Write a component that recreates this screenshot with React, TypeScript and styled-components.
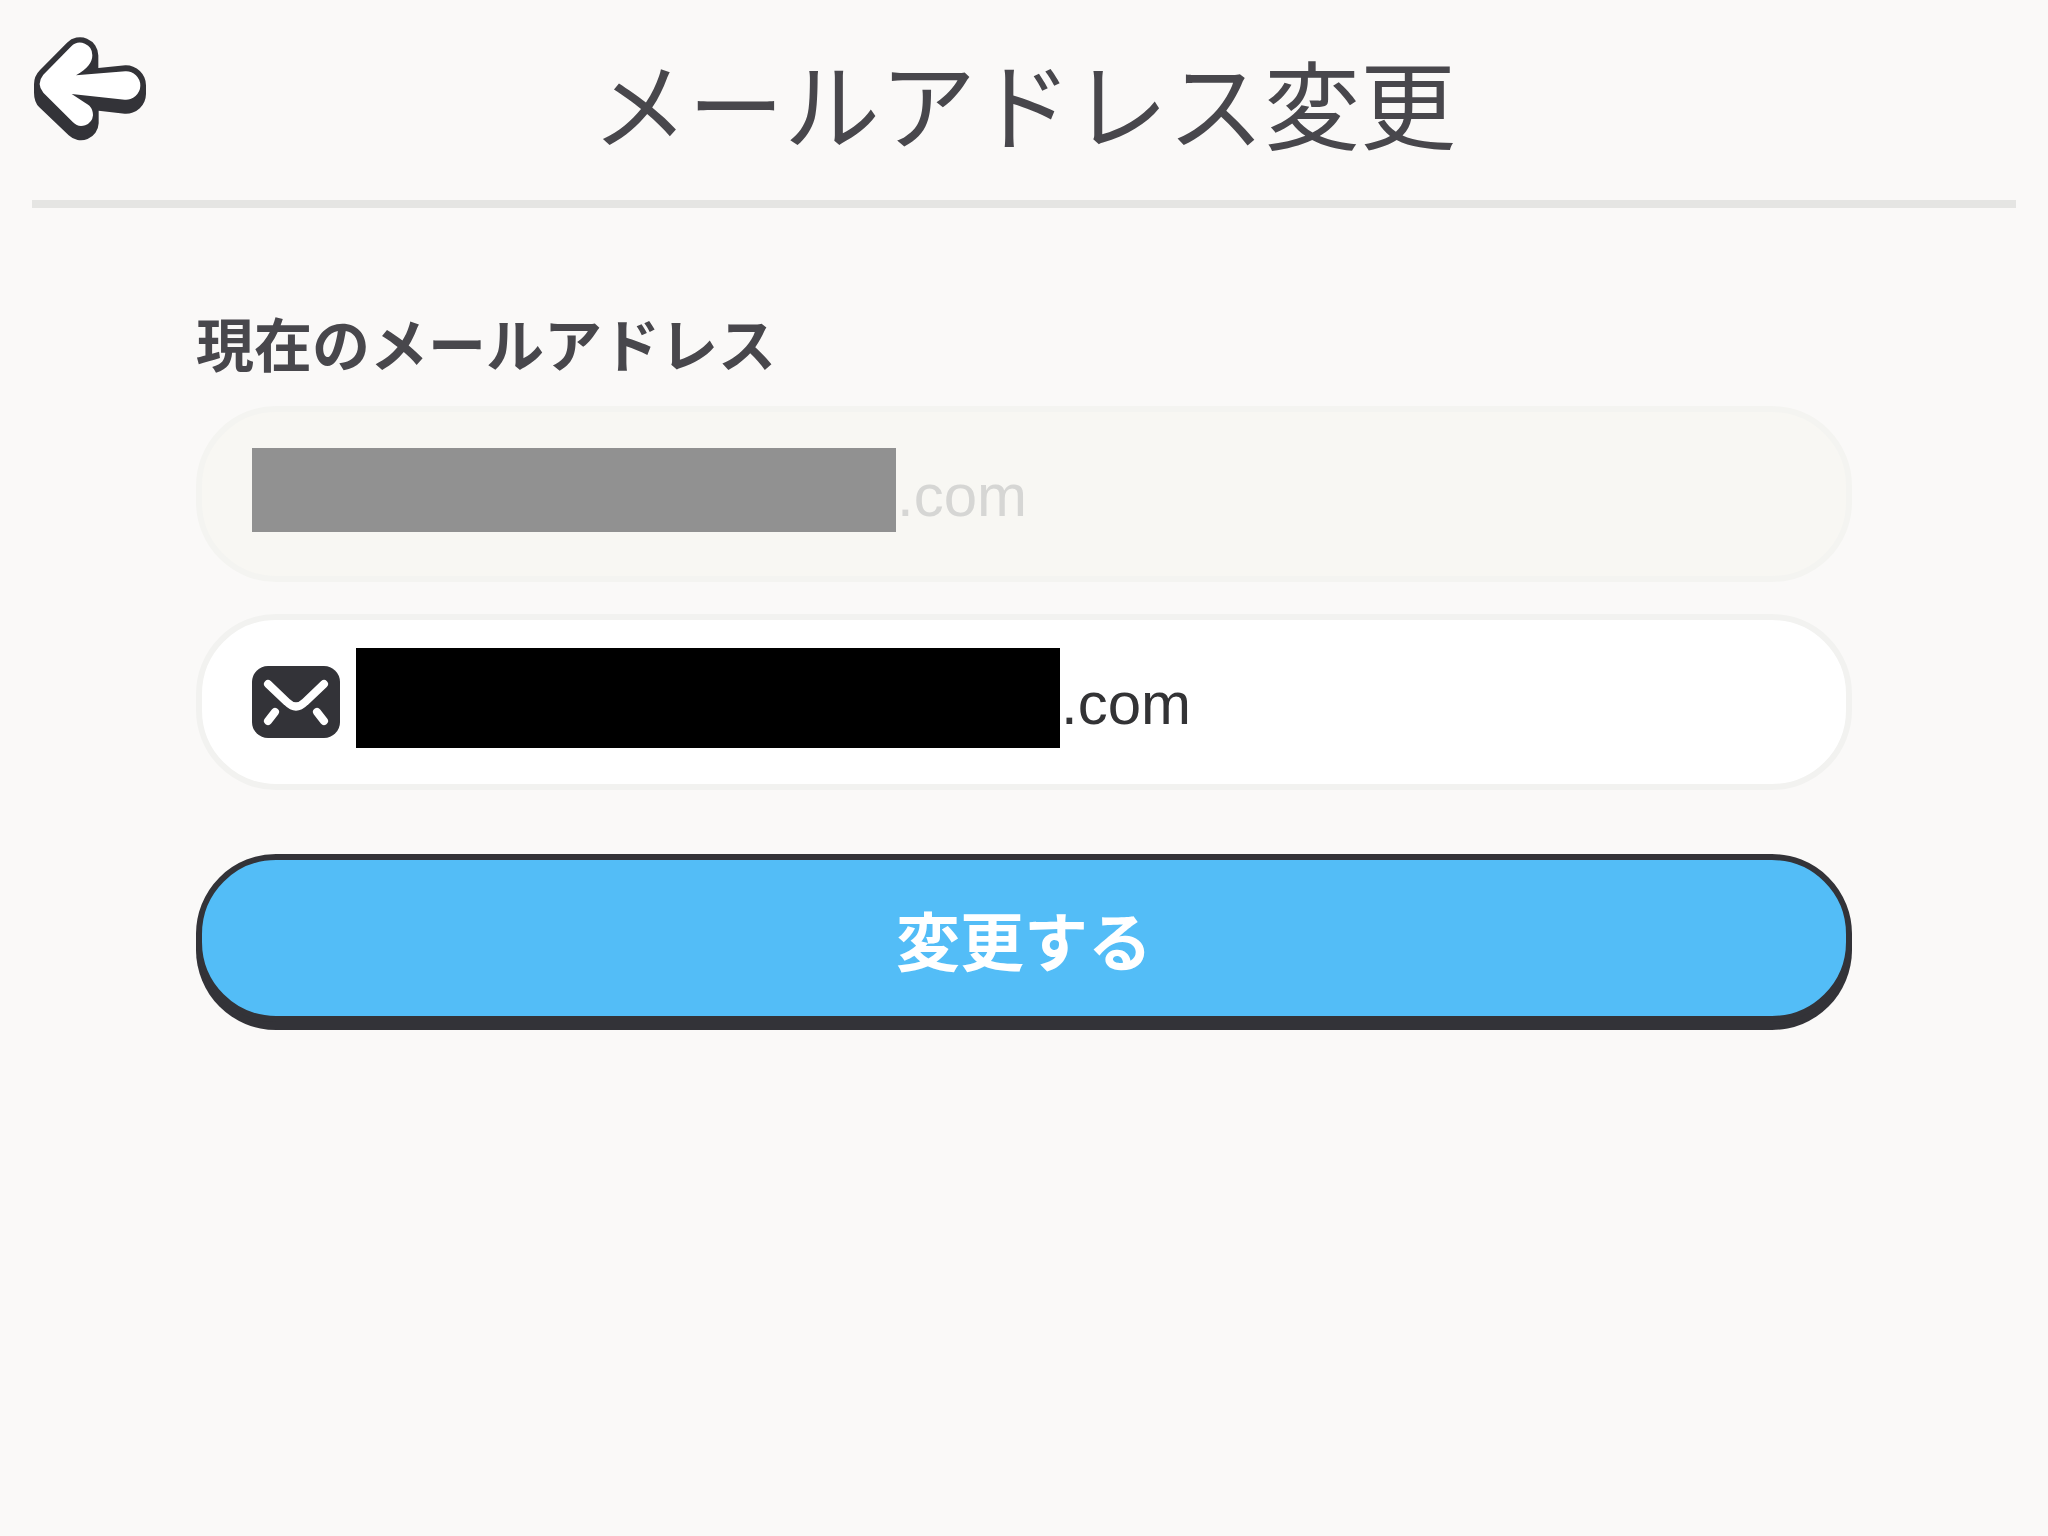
import React, { useState } from "react";
import styled, { createGlobalStyle } from "styled-components";

const ink = "#333338";
const jpFont = `"Noto Sans CJK JP", sans-serif`;
const latinFont = `"Liberation Sans", "Noto Sans CJK JP", sans-serif`;

const GlobalStyle = createGlobalStyle`
  *, *::before, *::after { box-sizing: border-box; }
  html { background: #faf9f8; }
  body { margin: 0; font-family: ${jpFont}; color: #48474c; }
`;

const Page = styled.div`
  min-height: 100vh;
  background: #faf9f8;
`;

const Header = styled.header`
  display: grid;
  grid-template-columns: 1fr auto 1fr;
  align-items: start;
  margin: 0 32px;
  padding: 29px 0 27px;
  border-bottom: 8px solid #e5e5e3;
`;

const BackButton = styled.button`
  justify-self: start;
  display: flex;
  padding: 8px 2px;
  border: 0;
  background: none;
  cursor: pointer;
`;

const Title = styled.h1`
  margin: 0;
  font-size: 96px;
  line-height: 144px;
  font-weight: 400;
`;

const Form = styled.form`
  display: flex;
  flex-direction: column;
  margin: 0 196px;
  padding-top: 94px;
`;

const Label = styled.label`
  margin-bottom: 24px;
  font-size: 58px;
  line-height: 80px;
  font-weight: 700;
`;

const Field = styled.div<{ $muted?: boolean }>`
  display: flex;
  align-items: center;
  height: 176px;
  padding: 0 50px;
  border: 6px solid ${(p) => (p.$muted ? "#f4f4f1" : "#f2f2f0")};
  border-radius: 80px;
  background: ${(p) => (p.$muted ? "#f8f7f3" : "#ffffff")};

  & + & { margin-top: 32px; }
`;

const MailIcon = styled.svg`
  flex: none;
  margin-right: 16px;
`;

const Mask = styled.span<{ $muted?: boolean }>`
  flex: none;
  width: ${(p) => (p.$muted ? "644px" : "704px")};
  height: ${(p) => (p.$muted ? "84px" : "100px")};
  margin-bottom: 8px;
  background: ${(p) => (p.$muted ? "#919191" : "#000000")};
`;

const EmailInput = styled.input`
  flex: 1;
  min-width: 0;
  height: 88px;
  padding: 2px 0 0 1px;
  border: 0;
  outline: 0;
  background: transparent;
  font-family: ${latinFont};
  font-size: 60px;
  color: #333335;

  &:disabled { color: #d6d6d4; }
`;

const SubmitButton = styled.button`
  height: 168px;
  margin: 64px 0 8px;
  padding: 0;
  border: 6px solid ${ink};
  border-radius: 80px;
  background: #53bdf7;
  box-shadow: 0 8px 0 ${ink};
  font-family: ${jpFont};
  font-size: 64px;
  line-height: 96px;
  font-weight: 700;
  color: #ffffff;
  cursor: pointer;
`;

function BackArrow() {
  return (
    <svg width="112" height="104" viewBox="42 53 336 312" aria-hidden="true">
      <path
        fill={ink}
        d="M235 146 L316 138 A60 60 0 0 1 378 198 V222 A60 60 0 0 1 314 283 L236 274 V312 A53 53 0 0 1 146 348 L58 264 Q42 248 42 220 V195 Q42 170 60 152 L141 70 A55 55 0 0 1 235 109 Z"
      />
      <path
        fill="#ffffff"
        d="M168 168 C204 148 217 128 217 108 A37 37 0 0 0 154 81 L70 166 Q48 193 70 220 L159 309 A35 35 0 0 0 219 288 C219 266 208 257 195 250 L155 224 L314 241 A43 43 0 0 0 361 199 A43 43 0 0 0 316 156 Z"
      />
    </svg>
  );
}

export default function App() {
  const [email, setEmail] = useState(".com");

  return (
    <Page>
      <GlobalStyle />
      <Header>
        <BackButton type="button" aria-label="戻る">
          <BackArrow />
        </BackButton>
        <Title>メールアドレス変更</Title>
      </Header>
      <Form onSubmit={(e) => e.preventDefault()}>
        <Label htmlFor="current-email">現在のメールアドレス</Label>
        <Field $muted>
          <Mask $muted />
          <EmailInput id="current-email" type="text" value=".com" disabled readOnly />
        </Field>
        <Field as="label">
          <MailIcon width="88" height="72" viewBox="0 0 88 72" aria-hidden="true">
            <rect width="88" height="72" rx="16" fill={ink} />
            <g fill="none" stroke="#ffffff" strokeWidth="8" strokeLinecap="round">
              <path d="M16 18 L35 36 Q44 45 53 36 L72 18" />
              <path d="M23 46 L16 55" />
              <path d="M65 46 L72 55" />
            </g>
          </MailIcon>
          <Mask />
          <EmailInput
            type="text"
            aria-label="メールアドレス"
            value={email}
            onChange={(e) => setEmail(e.target.value)}
          />
        </Field>
        <SubmitButton type="submit">変更する</SubmitButton>
      </Form>
    </Page>
  );
}
